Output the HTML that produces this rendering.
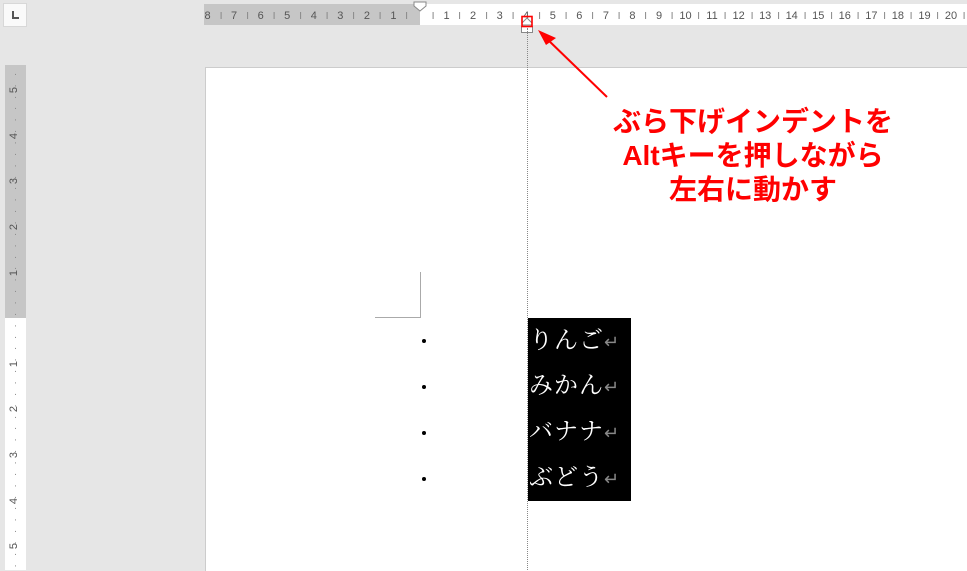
<!DOCTYPE html>
<html><head><meta charset="utf-8"><style>
body{margin:0;width:967px;height:570px;background:#e6e6e6;position:relative;overflow:hidden;font-family:"Liberation Sans",sans-serif}
.a{position:absolute}
.hn{position:absolute;top:9px;font-size:11px;color:#555;transform:translateX(-50%);line-height:14px}
.vn{position:absolute;left:8px;font-size:11px;color:#555;transform:translateY(-50%) rotate(-90deg);line-height:12px;width:12px;text-align:center}
.ln{position:absolute;left:529px;color:#fff;font-family:"Liberation Serif","Noto Serif CJK JP",serif;font-size:24px;letter-spacing:1px;line-height:26px;white-space:nowrap}
.ln span{color:#888;font-size:18px;letter-spacing:0}
.b{position:absolute;left:422px;width:4px;height:4px;border-radius:50%;background:#000}
.r{position:absolute;left:598px;width:310px;text-align:center;color:#f00;font-weight:bold;font-size:28px;line-height:34px;font-family:"Liberation Sans","Noto Sans CJK JP",sans-serif;white-space:nowrap}
</style></head><body>
<div class="a" style="left:3px;top:3px;width:24px;height:24px;background:#fafafa;border:1px solid #d8d8d8;box-sizing:border-box"></div>
<div class="a" style="left:12px;top:11px;width:2px;height:8px;background:#555"></div>
<div class="a" style="left:12px;top:17px;width:7px;height:2px;background:#555"></div>
<div class="a" style="left:204px;top:4px;width:216px;height:21px;background:#c6c6c6"></div>
<div class="a" style="left:420px;top:4px;width:547px;height:21px;background:#fff"></div>
<div class="a" style="left:204px;top:12px;width:763px;height:7px;background:repeating-linear-gradient(to right,transparent 0,transparent 12.8px,#888 12.8px,#888 13.8px,transparent 13.8px,transparent 26.55px);background-position:3.6px 0"></div>
<div class="hn" style="left:207.6px">8</div><div class="hn" style="left:234.1px">7</div><div class="hn" style="left:260.7px">6</div><div class="hn" style="left:287.2px">5</div><div class="hn" style="left:313.8px">4</div><div class="hn" style="left:340.3px">3</div><div class="hn" style="left:366.9px">2</div><div class="hn" style="left:393.4px">1</div>
<div class="hn" style="left:446.6px">1</div><div class="hn" style="left:473.1px">2</div><div class="hn" style="left:499.7px">3</div><div class="hn" style="left:526.2px">4</div><div class="hn" style="left:552.8px">5</div><div class="hn" style="left:579.3px">6</div><div class="hn" style="left:605.9px">7</div><div class="hn" style="left:632.4px">8</div><div class="hn" style="left:659px">9</div><div class="hn" style="left:685.5px">10</div><div class="hn" style="left:712px">11</div><div class="hn" style="left:738.6px">12</div><div class="hn" style="left:765.2px">13</div><div class="hn" style="left:791.7px">14</div><div class="hn" style="left:818.3px">15</div><div class="hn" style="left:844.8px">16</div><div class="hn" style="left:871.4px">17</div><div class="hn" style="left:897.9px">18</div><div class="hn" style="left:924.5px">19</div><div class="hn" style="left:951px">20</div>
<svg class="a" style="left:413px;top:1px" width="14" height="12"><path d="M1 1H13V5L7 10L1 5Z" fill="#fff" stroke="#888"/></svg>
<svg class="a" style="left:519px;top:14px" width="16" height="20"><path d="M3 9L8 4L13 9V11H3Z" fill="#fff" stroke="#888"/><rect x="2.5" y="12.5" width="11" height="6" fill="#fff" stroke="#888"/><rect x="3" y="2.5" width="10" height="10" fill="none" stroke="#f00" stroke-width="1.6"/></svg>
<div class="a" style="left:5px;top:65px;width:21px;height:253px;background:#c6c6c6"></div>
<div class="a" style="left:5px;top:318px;width:21px;height:252px;background:#fff"></div>
<div class="a" style="left:15px;top:65px;width:1px;height:505px;background:repeating-linear-gradient(to bottom,transparent 0,transparent 10.4px,#888 10.4px,#888 11.4px,transparent 11.4px,transparent 11.43px);background-position:0 -1.6px"></div>
<div class="vn" style="top:90px">5</div><div class="vn" style="top:135.7px">4</div><div class="vn" style="top:181.4px">3</div><div class="vn" style="top:227px">2</div><div class="vn" style="top:272.7px">1</div>
<div class="vn" style="top:363.7px">1</div><div class="vn" style="top:409.4px">2</div><div class="vn" style="top:455px">3</div><div class="vn" style="top:500.7px">4</div><div class="vn" style="top:546.4px">5</div>
<div class="a" style="left:205px;top:67px;width:762px;height:503px;background:#fff;border-left:1px solid #ccc;border-top:1px solid #ccc"></div>
<div class="a" style="left:420px;top:272px;width:1px;height:45px;background:#aaa"></div>
<div class="a" style="left:375px;top:317px;width:46px;height:1px;background:#aaa"></div>
<div class="a" style="left:527px;top:28px;width:0;height:542px;border-left:1px dotted #888"></div>
<div class="a" style="left:528px;top:318px;width:103px;height:183px;background:#000"></div>
<div class="ln" style="top:328px">りんご<span>↵</span></div>
<div class="ln" style="top:373px">みかん<span>↵</span></div>
<div class="ln" style="top:419px">バナナ<span>↵</span></div>
<div class="ln" style="top:465px">ぶどう<span>↵</span></div>
<div class="b" style="top:339px"></div><div class="b" style="top:385px"></div><div class="b" style="top:431px"></div><div class="b" style="top:477px"></div>
<svg class="a" style="left:0;top:0" width="967" height="570"><line x1="607" y1="97" x2="545" y2="37" stroke="#f00" stroke-width="2"/><path d="M538 30L556 38L546 45Z" fill="#f00"/></svg>
<div class="r" style="top:105px">ぶら下げインデントを</div>
<div class="r" style="top:139px">Altキーを押しながら</div>
<div class="r" style="top:173px">左右に動かす</div>
</body></html>
